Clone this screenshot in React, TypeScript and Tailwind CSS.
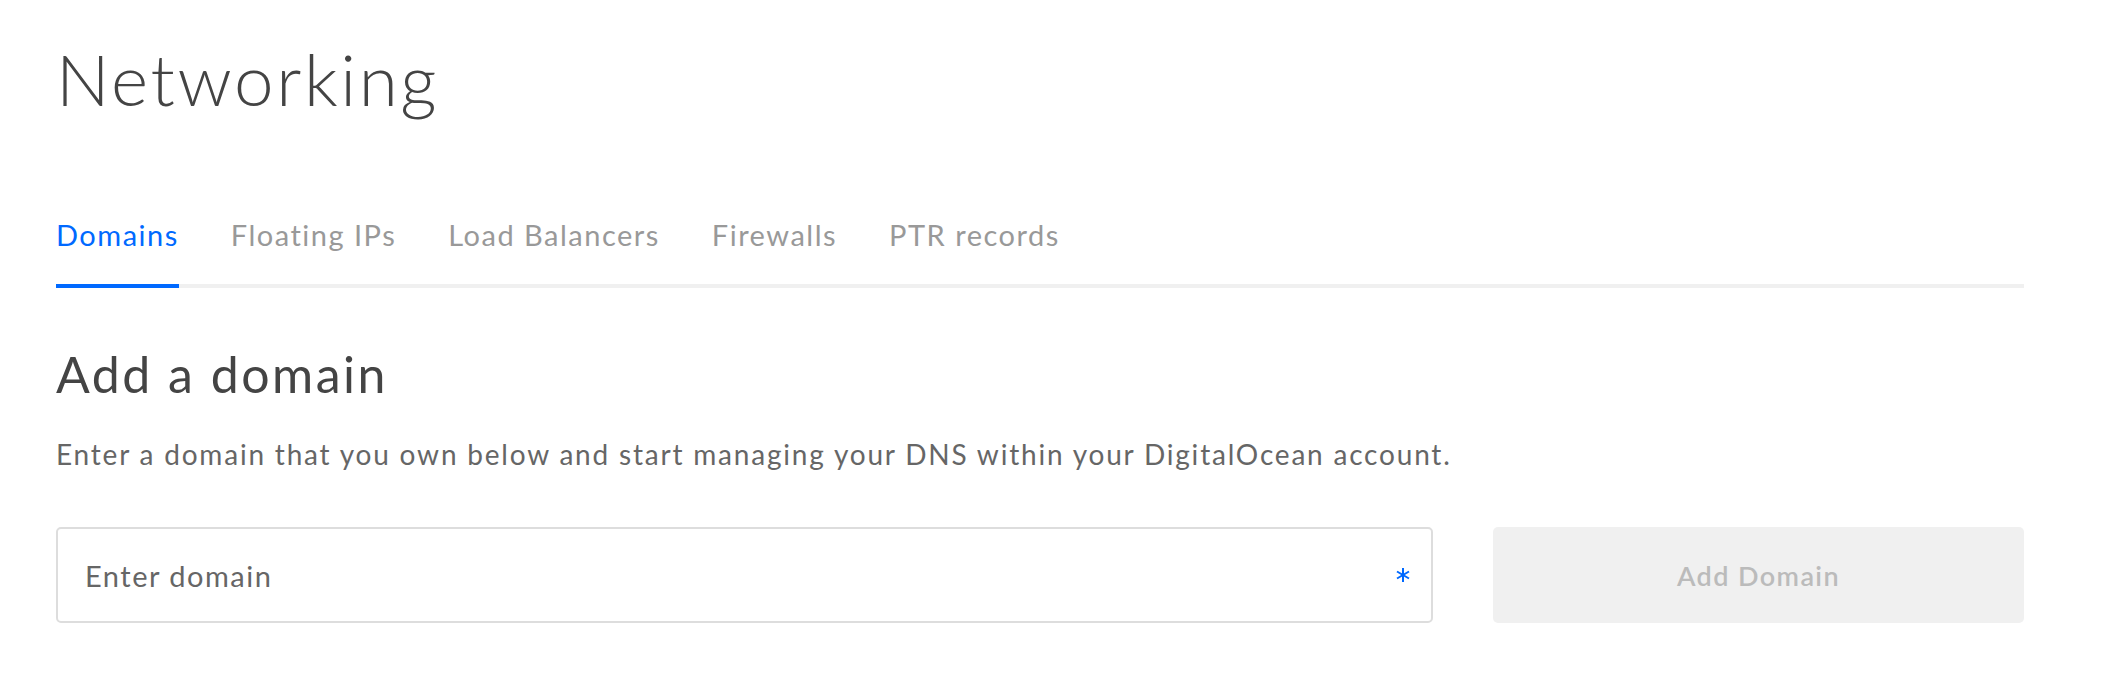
import React from "react";

const tabs = ["Domains", "Floating IPs", "Load Balancers", "Firewalls", "PTR records"];

export default function App() {
  return (
    <div className="min-h-[700px] w-[2128px] bg-white" style={{ fontFamily: "Lato, 'Open Sans', sans-serif" }}>
      <div className="ml-[56px] w-[1968px] pt-[43px]">
        <h1 className="text-[71px] font-light leading-none tracking-[2.6px] text-[#444444]">Networking</h1>
        <div className="mt-[106px] flex gap-[52px] border-b-4 border-[#f0f0f0]">
          {tabs.map((t, i) => (
            <div
              key={t}
              className={
                i === 0
                  ? "-mb-[4px] border-b-4 border-[#0069ff] pb-[35px] text-[29px] leading-none tracking-[1.5px] text-[#0069ff]"
                  : "-mb-[4px] border-b-4 border-transparent pb-[35px] text-[29px] leading-none tracking-[1.5px] text-[#999999]"
              }
            >
              {t}
            </div>
          ))}
        </div>
        <h2 className="mt-[61px] text-[50px] leading-none tracking-[2.5px] text-[#444444]">Add a domain</h2>
        <p className="mt-[41px] text-[28px] leading-none tracking-[1.8px] text-[#666666]">
          Enter a domain that you own below and start managing your DNS within your DigitalOcean account.
        </p>
        <div className="mt-[59px] flex gap-[60px]">
          <div className="flex h-[96px] w-[1377px] items-center justify-between rounded-[5px] border-2 border-[#dddddd] pl-[27px] pr-[21px]">
            <span className="text-[29px] leading-none tracking-[1.5px] text-[#666666]">Enter domain</span>
            <svg width="14" height="14" viewBox="0 0 14 14" className="text-[#0069ff]">
              <g stroke="currentColor" strokeWidth="2" strokeLinecap="butt">
                <line x1="7" y1="0" x2="7" y2="14" />
                <line x1="1" y1="3.5" x2="13" y2="10.5" />
                <line x1="1" y1="10.5" x2="13" y2="3.5" />
              </g>
            </svg>
          </div>
          <button className="flex h-[96px] flex-1 items-center justify-center rounded-[5px] bg-[#f0f0f0] text-[27px] font-semibold leading-none tracking-[1.4px] text-[#bbbbbb]">
            Add Domain
          </button>
        </div>
      </div>
    </div>
  );
}
